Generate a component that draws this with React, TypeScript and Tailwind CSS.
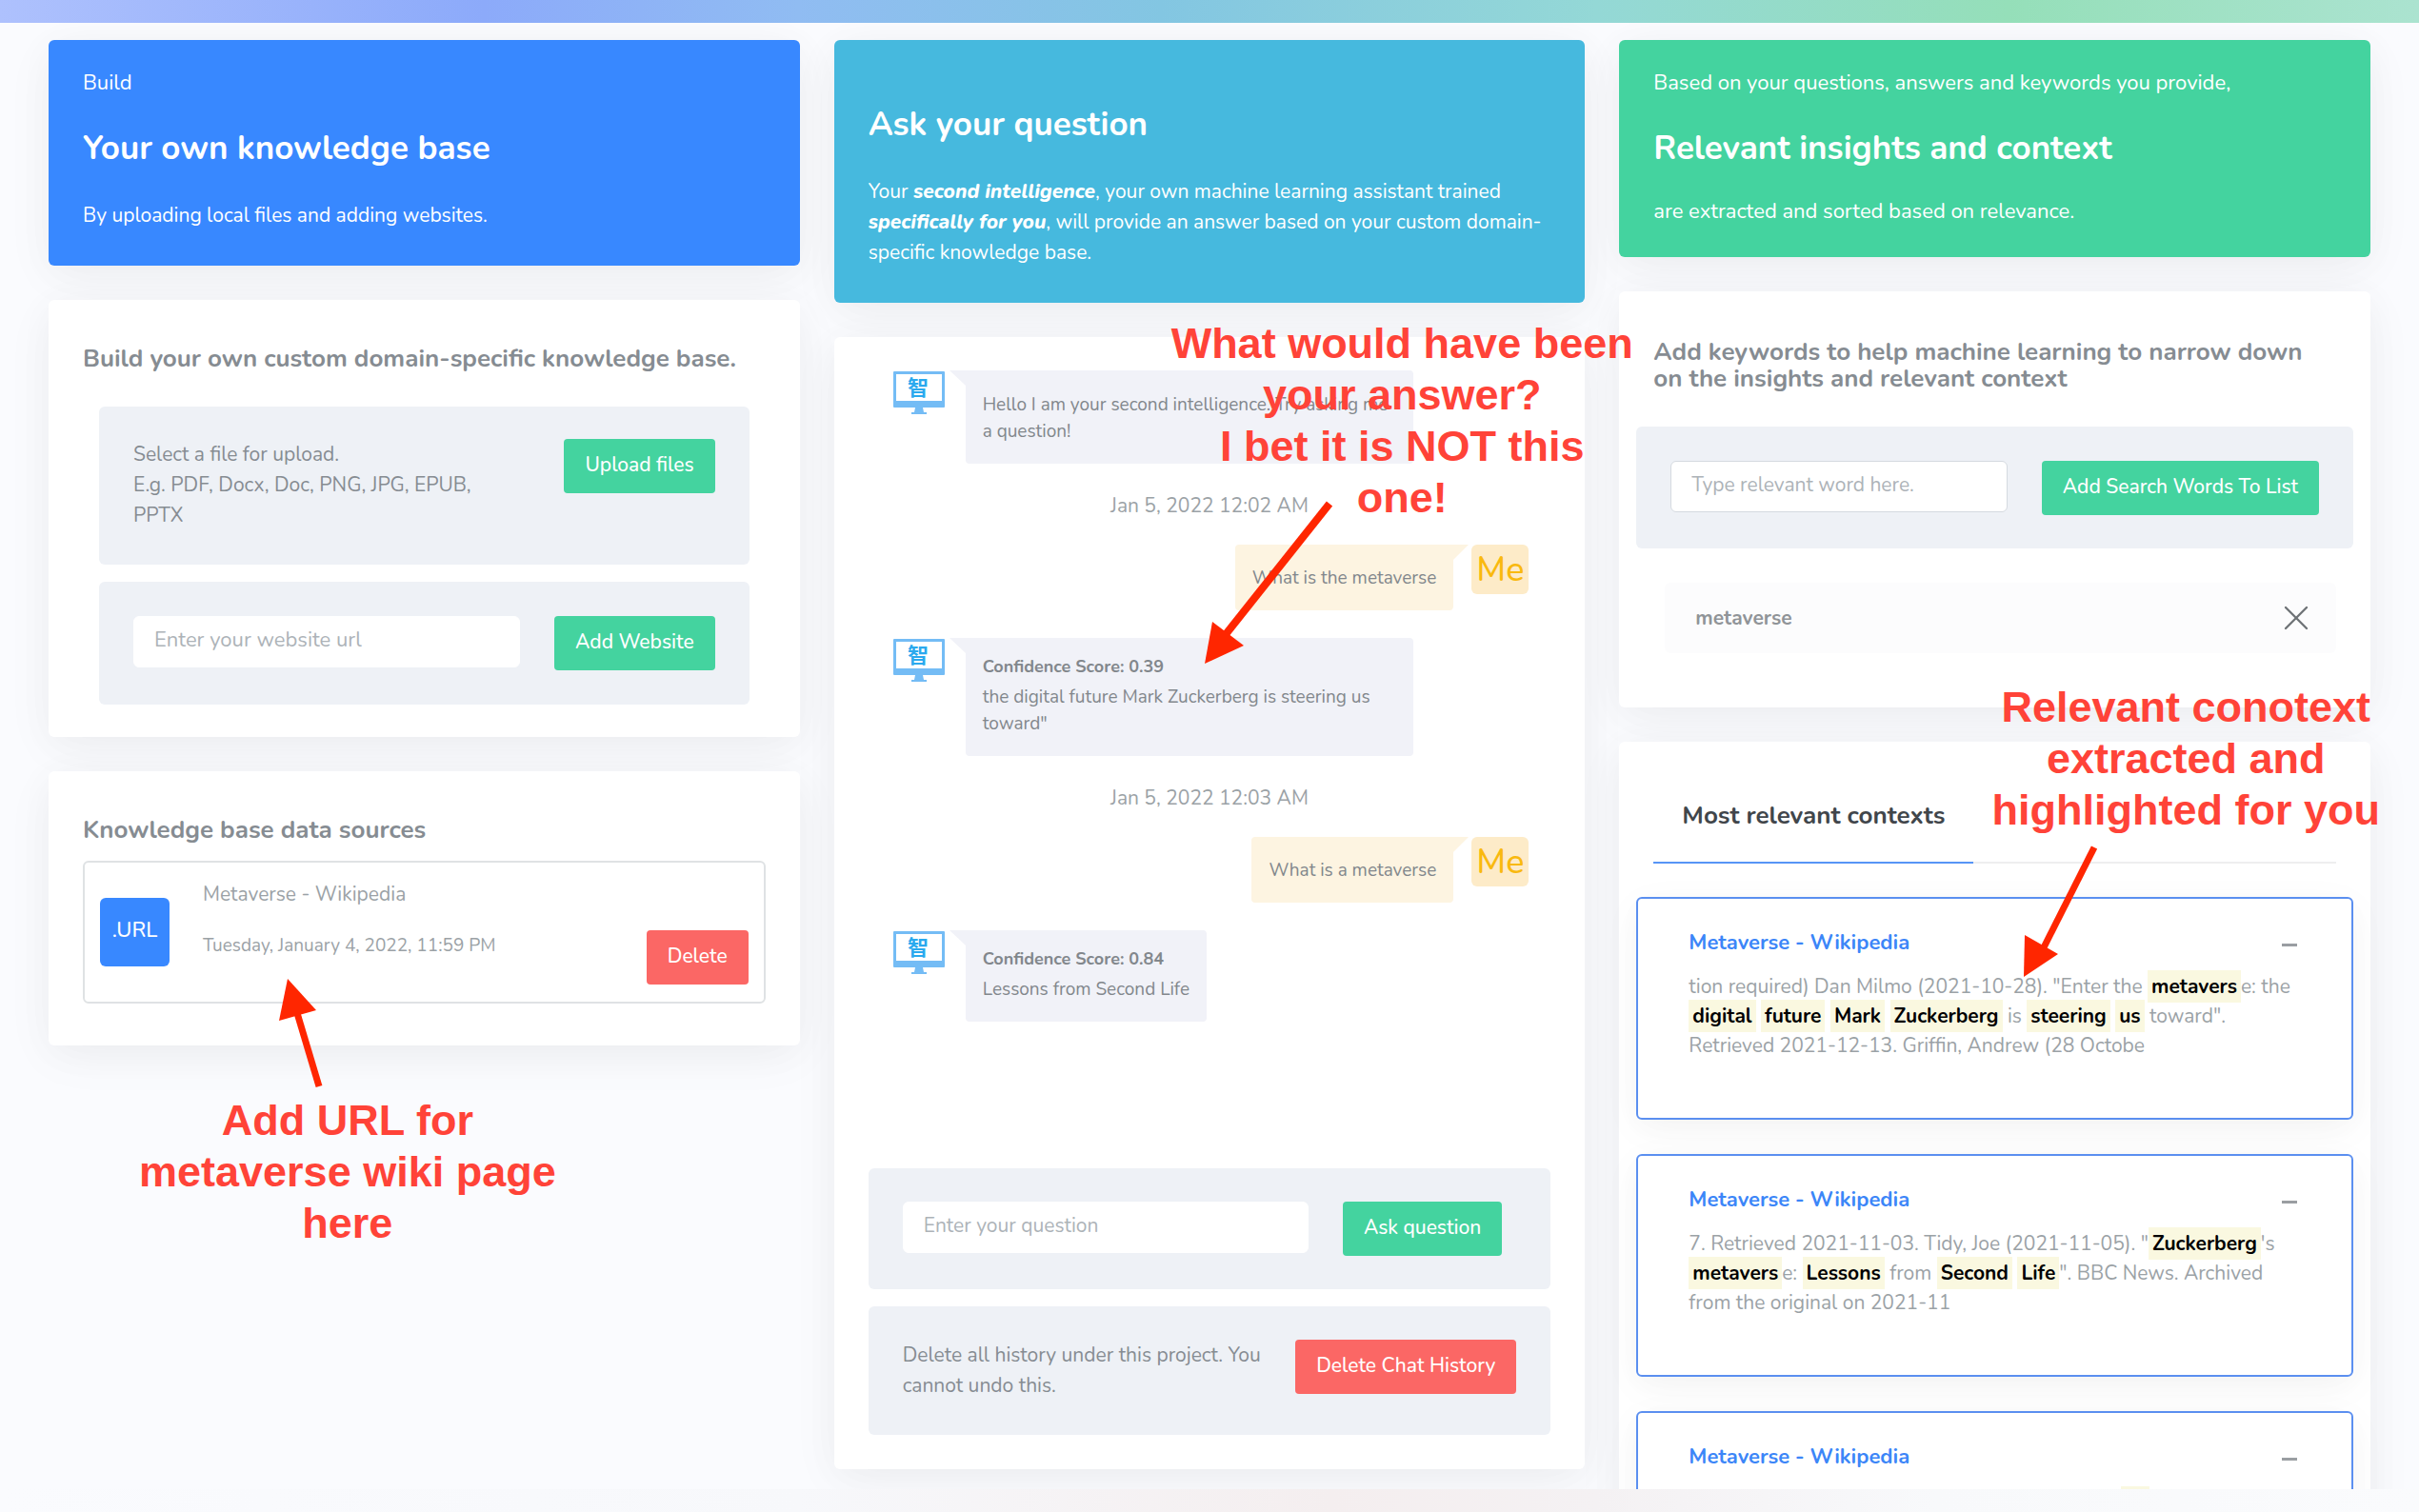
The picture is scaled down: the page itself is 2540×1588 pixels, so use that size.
import type { ReactNode } from 'react';
import { X } from 'lucide-react';
import clsx from 'clsx';

const CARD_SHADOW = 'shadow-[0_12px_56px_rgba(4,9,20,0.04),0_8px_40px_rgba(4,9,20,0.03)]';

type Part = string | { mark: string };

const CONTEXTS: Part[][] = [
  [
    'tion required) Dan Milmo (2021-10-28). "Enter the ', { mark: 'metavers' }, 'e: the ',
    { mark: 'digital' }, ' ', { mark: 'future' }, ' ', { mark: 'Mark' }, ' ', { mark: 'Zuckerberg' }, ' is ',
    { mark: 'steering' }, ' ', { mark: 'us' }, ' toward". Retrieved 2021-12-13. Griffin, Andrew (28 Octobe',
  ],
  [
    '7. Retrieved 2021-11-03. Tidy, Joe (2021-11-05). "', { mark: 'Zuckerberg' }, "'s ",
    { mark: 'metavers' }, 'e: ', { mark: 'Lessons' }, ' from ', { mark: 'Second' }, ' ', { mark: 'Life' },
    '". BBC News. Archived from the original on 2021-11',
  ],
];

function Card({ children, className }: { children: ReactNode; className?: string }) {
  return <section className={clsx('rounded-md bg-white', CARD_SHADOW, className)}>{children}</section>;
}

function Button({ children, danger }: { children: ReactNode; danger?: boolean }) {
  return (
    <button
      type="button"
      className={clsx(
        'h-[57px] shrink-0 rounded-sm px-[22px] pb-1 text-[21px] leading-8 font-medium text-white',
        danger ? 'bg-[#fb6765]' : 'bg-[#44d39f]'
      )}
    >
      {children}
    </button>
  );
}

function TextBox({ label, className }: { label: string; className: string }) {
  return (
    <input
      type="text"
      aria-label={label}
      placeholder={label}
      className={clsx('h-[54px] min-w-0 flex-1 rounded-md border bg-white px-[21px] pb-1 text-[#495057] outline-none placeholder:text-[#adb3b8]', className)}
    />
  );
}

function BotAvatar() {
  return (
    <svg width="56" height="46" viewBox="0 0 56 46" className="mt-px shrink-0" aria-hidden="true">
      <rect x="1" y="0" width="54" height="38" rx="1" fill="#74bcf5" />
      <rect x="4" y="3" width="48" height="28" fill="#fff" />
      <path d="M24 38h8l1 5h3v2H20v-2h3z" fill="#74bcf5" />
      <text x="27" y="25" textAnchor="middle" fontSize="22" fontWeight="700" fill="#2aa9ee" fontFamily="'Noto Sans CJK JP', sans-serif">
        智
      </text>
    </svg>
  );
}

function BotMessage({ text, score }: { text: string; score?: string }) {
  return (
    <div className="flex items-start pl-[25px]">
      <BotAvatar />
      <svg width="17" height="16" viewBox="0 0 17 16" className="ml-1 shrink-0" aria-hidden="true">
        <path d="M0 0h17v16z" fill="#f1f2f8" />
      </svg>
      <div className={clsx('max-w-[470px] rounded-sm rounded-tl-none bg-[#f1f2f8] px-[18px] pb-5 text-[19px] leading-7 text-[#82878c]', score ? 'pt-4' : 'pt-[22px]')}>
        {score && <p className="mb-1 text-[18px] font-bold">Confidence Score: {score}</p>}
        <p>{text}</p>
      </div>
    </div>
  );
}

function MyMessage({ text }: { text: string }) {
  return (
    <div className="flex items-start justify-end pr-[23px]">
      <div className="rounded-sm rounded-tr-none bg-[#fdf4e1] px-[18px] pt-[21px] pb-5 text-[19px] leading-7 text-[#82878c]">{text}</div>
      <svg width="16" height="16" viewBox="0 0 16 16" className="shrink-0" aria-hidden="true">
        <path d="M0 0h16L0 16z" fill="#fdf4e1" />
      </svg>
      <div className="ml-[3px] h-[52px] w-[60px] rounded-md bg-[#fdebc8] text-center text-[36px] leading-[53px] font-medium text-[#f9b90f]">Me</div>
    </div>
  );
}

function ChatDate({ children }: { children: ReactNode }) {
  return <p className="mt-7 mb-[25px] text-center text-[21px] leading-8 text-[#9ba2a6]">{children}</p>;
}

function ContextCard({ children }: { children: ReactNode }) {
  return (
    <article className="min-h-[234px] rounded-md border-2 border-[#5b8ff0] bg-white px-[53px] pt-[30px] shadow-[0_10px_44px_rgba(4,9,20,0.04),0_8px_30px_rgba(4,9,20,0.02)]">
      <div className="flex items-center justify-between">
        <a href="#" className="text-[22px] leading-8 font-bold text-[#3c86f8]">Metaverse - Wikipedia</a>
        <button type="button" aria-label="Collapse" className="mr-1 h-8 w-4">
          <span className="mt-1 block h-[3px] bg-[#9a9ea2]" />
        </button>
      </div>
      <p className="mt-[15px] text-[21px] leading-[31px] text-[#9ba2a6]">{children}</p>
    </article>
  );
}

function Callout({ lines, className }: { lines: string[]; className: string }) {
  return (
    <div className={clsx('pointer-events-none absolute z-20 text-center font-["Liberation_Sans",Helvetica,Arial,sans-serif] text-[45px] leading-[54px] font-bold whitespace-nowrap text-[#ff4338]', className)}>
      {lines.map(line => <p key={line}>{line}</p>)}
    </div>
  );
}

export default function App() {
  return (
    <div className="flex h-screen flex-col overflow-hidden bg-[#fafbfe] font-[Nunito,Lato,sans-serif] text-[21px] leading-8 text-[#868c92]">
      <div className="h-6 shrink-0 bg-[linear-gradient(90deg,#aec1fd_0%,#8caafa_20%,#90bcf2_33%,#83c6e2_48%,#94d8d6_66%,#95dfb9_83%,#abe3d0_100%)]" />

      <main className="grid min-h-0 flex-1 grid-cols-3 items-start gap-9 overflow-hidden px-[51px] pt-[18px]">
        {/* Knowledge base */}
        <div className="relative flex flex-col gap-9">
          <section className={clsx('rounded-md bg-[#3888ff] px-9 pt-[29px] pb-[37px] text-white', CARD_SHADOW)}>
            <p className="text-[22px]">Build</p>
            <h2 className="mt-[31px] mb-8 text-[35px] leading-11 font-bold">Your own knowledge base</h2>
            <p>By uploading local files and adding websites.</p>
          </section>

          <Card className="px-9 pt-12 pb-[34px]">
            <h3 className="text-[26px] leading-7 font-bold">Build your own custom domain-specific knowledge base.</h3>
            <div className="mx-[17px] mt-9 flex items-start justify-between rounded-md bg-[#eef1f6] px-9 pt-[34px] pb-9">
              <div>
                <p>Select a file for upload.</p>
                <p>E.g. PDF, Docx, Doc, PNG, JPG, EPUB,<br />PPTX</p>
              </div>
              <Button>Upload files</Button>
            </div>
            <div className="mx-[17px] mt-[18px] flex items-start gap-9 rounded-md bg-[#eef1f6] px-9 py-9">
              <TextBox label="Enter your website url" className="border-white text-[22px]" />
              <Button>Add Website</Button>
            </div>
          </Card>

          <Card className="px-9 pt-12 pb-11">
            <h3 className="text-[26px] leading-7 font-bold">Knowledge base data sources</h3>
            <div className="mt-[18px] flex h-[150px] items-center rounded-md border-2 border-[#dfe2e4] px-4">
              <div className="flex h-[72px] w-[73px] items-center justify-center rounded-md bg-[#3888ff] pb-1 text-[22px] font-medium text-white">.URL</div>
              <div className="ml-[35px] self-start pt-[17px] text-[#9ba2a6]">
                <p>Metaverse - Wikipedia</p>
                <p className="mt-[22px] text-[19px]">Tuesday, January 4, 2022, 11:59 PM</p>
              </div>
              <div className="mb-[18px] ml-auto self-end">
                <Button danger>Delete</Button>
              </div>
            </div>
          </Card>

          <Callout className="top-[1108px] left-[95px]" lines={['Add URL for', 'metaverse wiki page', 'here']} />
          <svg width="50" height="116" viewBox="0 0 50 116" className="absolute top-[986px] left-[242px] z-20" aria-hidden="true">
            <path d="M19 36L42 113" stroke="#ff2600" strokeWidth="7" />
            <path d="M9 0L0 44L39 33z" fill="#ff2600" />
          </svg>
        </div>

        {/* Chat */}
        <div className="relative z-10 flex flex-col gap-9">
          <section className={clsx('rounded-md bg-[#46b9de] px-9 pt-[67px] pb-[37px] text-white', CARD_SHADOW)}>
            <h2 className="mb-8 text-[35px] leading-11 font-bold">Ask your question</h2>
            <p>
              Your <em className="font-extrabold">second intelligence</em>, your own machine learning assistant trained{' '}
              <em className="font-extrabold">specifically for you</em>, will provide an answer based on your custom domain-specific knowledge base.
            </p>
          </section>

          <Card className="px-9 pt-[35px] pb-9">
            <div className="min-h-[838px]">
              <BotMessage text="Hello I am your second intelligence. Try asking me a question!" />
              <ChatDate>Jan 5, 2022 12:02 AM</ChatDate>
              <MyMessage text="What is the metaverse" />
              <div className="h-[29px]" />
              <BotMessage score="0.39" text={'the digital future Mark Zuckerberg is steering us toward"'} />
              <ChatDate>Jan 5, 2022 12:03 AM</ChatDate>
              <MyMessage text="What is a metaverse" />
              <div className="h-[29px]" />
              <BotMessage score="0.84" text="Lessons from Second Life" />
            </div>
            <div className="flex items-start gap-9 rounded-md bg-[#eef1f6] py-[35px] pr-[51px] pl-9">
              <TextBox label="Enter your question" className="border-white" />
              <Button>Ask question</Button>
            </div>
            <div className="mt-[18px] flex items-start justify-between gap-6 rounded-md bg-[#eef1f6] px-9 pt-[35px] pb-9">
              <p>Delete all history under this project. You cannot undo this.</p>
              <Button danger>Delete Chat History</Button>
            </div>
          </Card>

          <Callout className="top-[292px] left-[354px]" lines={['What would have been', 'your answer?', 'I bet it is NOT this', 'one!']} />
          <svg width="140" height="176" viewBox="0 0 140 176" className="absolute top-[483px] left-[388px] z-20" aria-hidden="true">
            <path d="M132 4L20 145" stroke="#ff2600" strokeWidth="8" />
            <path d="M1 172L9 128L42 153z" fill="#ff2600" />
          </svg>
        </div>

        {/* Insights */}
        <div className="relative flex flex-col gap-9">
          <section className={clsx('rounded-md bg-[#44d39f] px-9 pt-[29px] pb-8 text-[22px] text-white', CARD_SHADOW)}>
            <p>Based on your questions, answers and keywords you provide,</p>
            <h2 className="mt-[31px] mb-7 text-[35px] leading-11 font-bold">Relevant insights and context</h2>
            <p>are extracted and sorted based on relevance.</p>
          </section>

          <Card className="px-[18px] pt-[50px] pb-[57px]">
            <h3 className="px-[18px] text-[26px] leading-7 font-bold">Add keywords to help machine learning to narrow down on the insights and relevant context</h3>
            <div className="mt-9 flex items-start gap-9 rounded-md bg-[#eef1f6] px-9 pt-[36px] pb-[35px]">
              <TextBox label="Type relevant word here." className="border-[#d5dae0]" />
              <Button>Add Search Words To List</Button>
            </div>
            <div className="mt-9 mr-[18px] ml-[30px] flex h-[74px] items-center justify-between rounded-md bg-[#fcfcfd] px-8">
              <span className="font-bold text-[#909498]">metaverse</span>
              <button type="button" aria-label="Remove metaverse" className="-mr-3">
                <X size={44} strokeWidth={1.3} className="text-[#6e7276]" />
              </button>
            </div>
          </Card>

          <Card className="px-[18px] pt-[62px]">
            <div className="mx-[18px] flex border-b-2 border-[#eeeeef]">
              <button type="button" className="-mb-[2px] border-b-2 border-[#5795f6] px-[30px] pb-8 text-[26px] leading-8 font-bold text-[#41464b]">
                Most relevant contexts
              </button>
            </div>
            <div className="mt-[35px] flex flex-col gap-9">
              {CONTEXTS.map((parts, i) => (
                <ContextCard key={i}>
                  {parts.map((part, j) =>
                    typeof part === 'string' ? part : (
                      <mark key={j} className="bg-[#faf8e0] px-1 py-[3px] font-bold text-black">{part.mark}</mark>
                    )
                  )}
                </ContextCard>
              ))}
              <ContextCard>
                <span className="ml-[454px] block h-9 w-[30px] bg-[#faf8e0]" />
              </ContextCard>
            </div>
          </Card>

          <Callout className="top-[674px] right-[-10px]" lines={['Relevant conotext', 'extracted and', 'highlighted for you']} />
          <svg width="84" height="144" viewBox="0 0 84 144" className="absolute top-[844px] left-[423px] z-20" aria-hidden="true">
            <path d="M76 4L20 115" stroke="#ff2600" strokeWidth="7" />
            <path d="M2 140L3 96L38 116z" fill="#ff2600" />
          </svg>
        </div>
      </main>

      <div className="z-20 h-6 shrink-0 bg-[linear-gradient(90deg,#fafbfe_0%,#f7f8fb_33%,#f4eeef_55%,#f4f1f3_66%,#f8f9fb_80%,#fafbfd_100%)]" />
    </div>
  );
}
